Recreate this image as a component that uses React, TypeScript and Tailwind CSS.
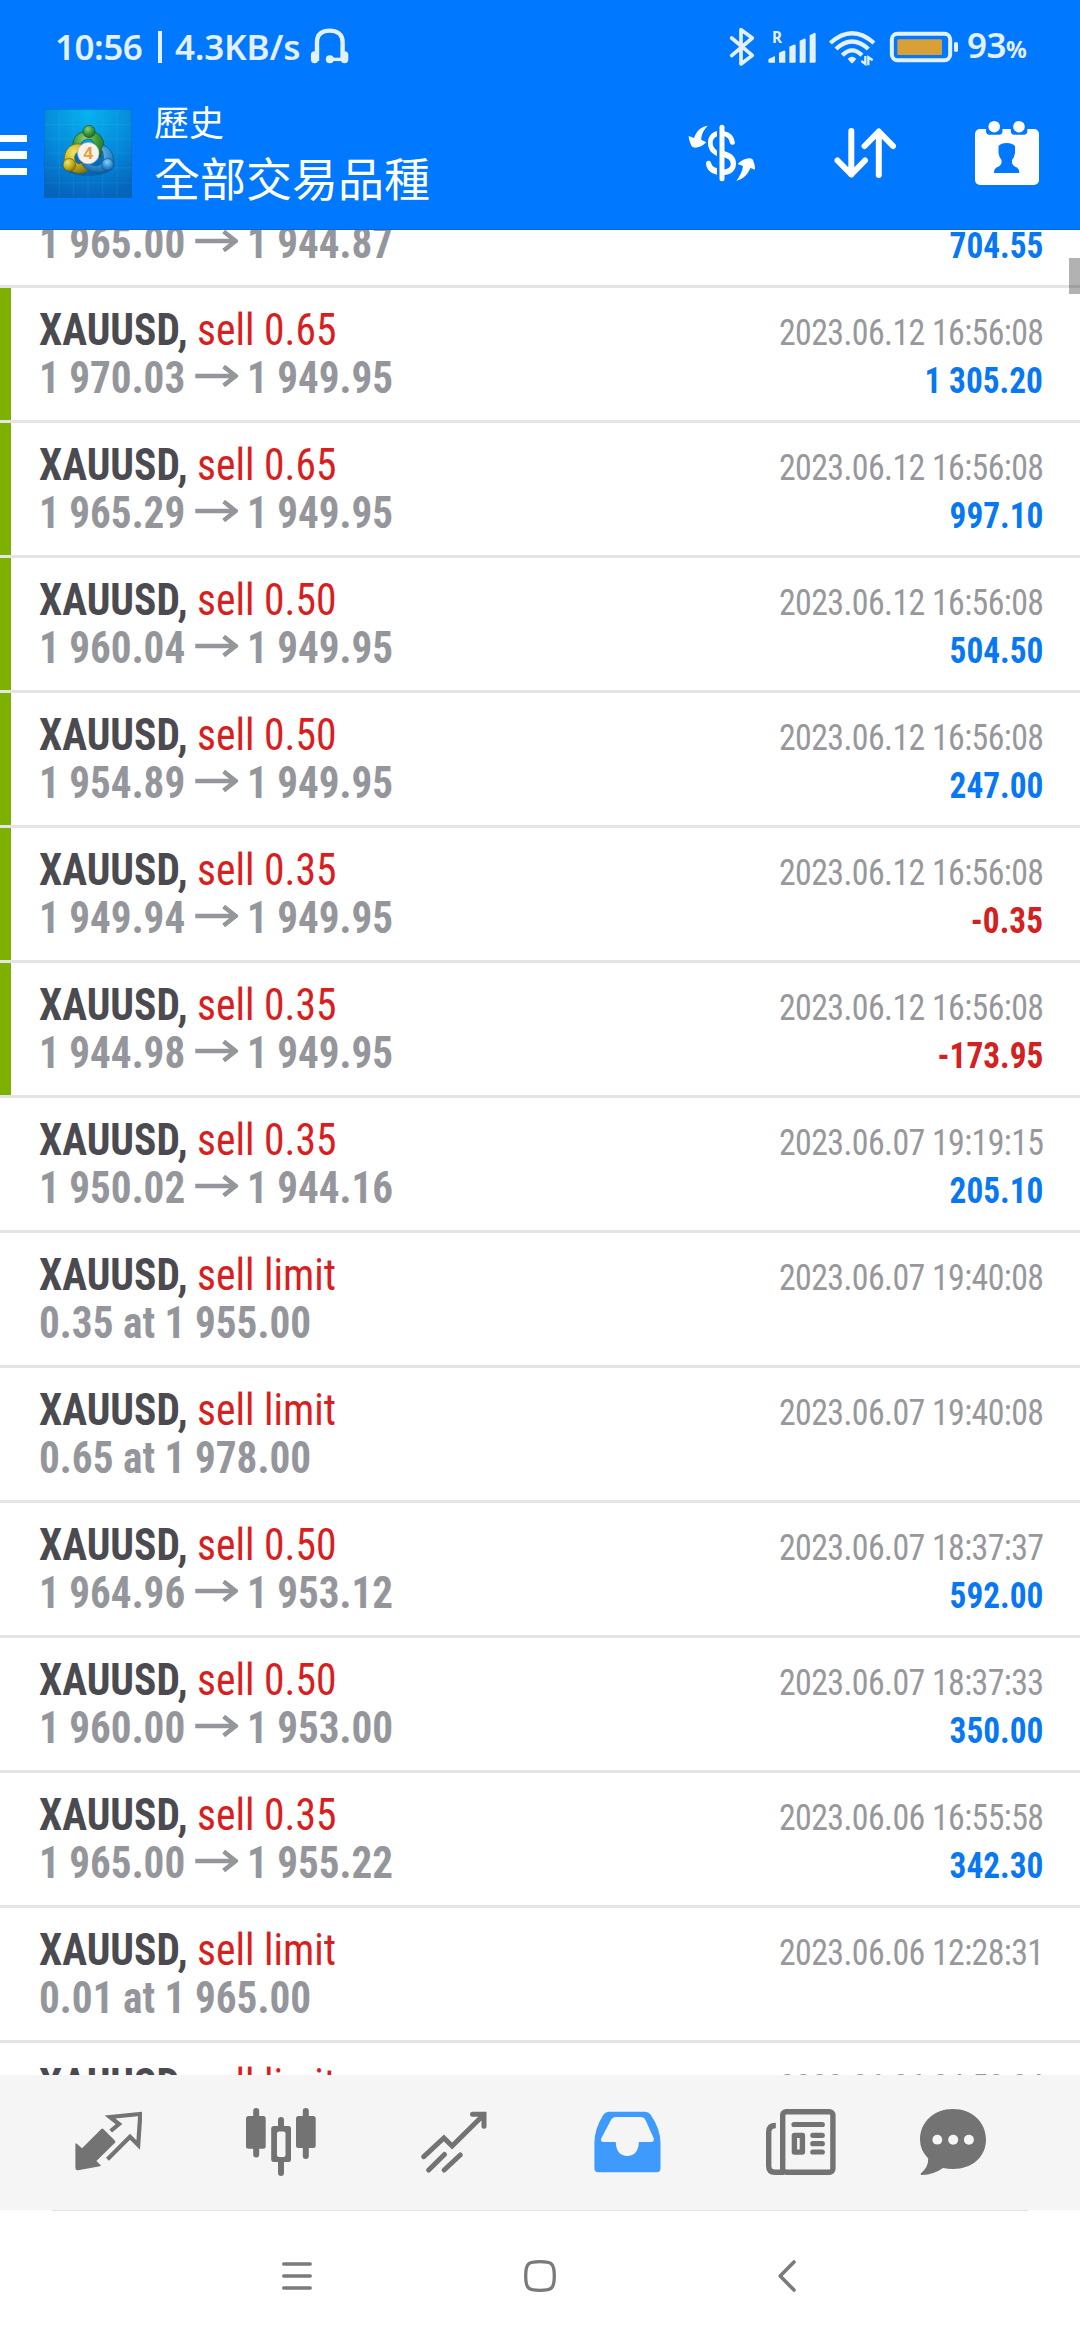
type Item = {
  action: string;
  time: string;
  open?: string;
  close?: string;
  note?: string;
  profit?: string;
  marked?: boolean;
};

const history: Item[] = [
  { action: 'sell 0.35', time: '2023.06.12 16:56:08', open: '1 965.00', close: '1 944.87', profit: '704.55' },
  { action: 'sell 0.65', time: '2023.06.12 16:56:08', open: '1 970.03', close: '1 949.95', profit: '1 305.20', marked: true },
  { action: 'sell 0.65', time: '2023.06.12 16:56:08', open: '1 965.29', close: '1 949.95', profit: '997.10', marked: true },
  { action: 'sell 0.50', time: '2023.06.12 16:56:08', open: '1 960.04', close: '1 949.95', profit: '504.50', marked: true },
  { action: 'sell 0.50', time: '2023.06.12 16:56:08', open: '1 954.89', close: '1 949.95', profit: '247.00', marked: true },
  { action: 'sell 0.35', time: '2023.06.12 16:56:08', open: '1 949.94', close: '1 949.95', profit: '-0.35', marked: true },
  { action: 'sell 0.35', time: '2023.06.12 16:56:08', open: '1 944.98', close: '1 949.95', profit: '-173.95', marked: true },
  { action: 'sell 0.35', time: '2023.06.07 19:19:15', open: '1 950.02', close: '1 944.16', profit: '205.10' },
  { action: 'sell limit', time: '2023.06.07 19:40:08', note: '0.35 at 1 955.00' },
  { action: 'sell limit', time: '2023.06.07 19:40:08', note: '0.65 at 1 978.00' },
  { action: 'sell 0.50', time: '2023.06.07 18:37:37', open: '1 964.96', close: '1 953.12', profit: '592.00' },
  { action: 'sell 0.50', time: '2023.06.07 18:37:33', open: '1 960.00', close: '1 953.00', profit: '350.00' },
  { action: 'sell 0.35', time: '2023.06.06 16:55:58', open: '1 965.00', close: '1 955.22', profit: '342.30' },
  { action: 'sell limit', time: '2023.06.06 12:28:31', note: '0.01 at 1 965.00' },
  { action: 'sell limit', time: '2023.06.06 04:58:04', note: '0.35 at 1 965.00' },
];

function StatusBar() {
  return (
    <div className="flex h-[94px] items-center pl-[55px] text-[35px] leading-[64px] font-semibold text-[#e3f0ff] font-['Noto_Sans',sans-serif]">
      <span className="w-[103px] tracking-[-0.5px]">10:56</span>
      <span className="h-[32px] w-[4px] bg-[#e3f0ff]" />
      <span className="ml-[13px] w-[135px] tracking-[-0.2px]">4.3KB/s</span>
      <svg className="h-[40px] w-[39px]" viewBox="0 0 39 40" fill="none" stroke="currentColor">
        <path d="M7 34V15C7 7 12.5 3.6 19.5 3.6S32.6 7 32.6 15V34" strokeWidth="4.4" />
        <path d="M4.6 28v4.6M34.6 28v4.6" strokeWidth="7.4" strokeLinecap="round" />
        <path d="M32 32.4H20" strokeWidth="3.4" />
        <circle cx="19.8" cy="32.2" r="4" fill="currentColor" stroke="none" />
      </svg>
      <svg className="ml-[380px] h-[42px] w-[26px]" viewBox="27 18 78 126" fill="none" stroke="currentColor" strokeWidth="11" strokeLinecap="round" strokeLinejoin="round">
        <path d="M35 54L97 106L63 132V29L97 54L35 107" />
      </svg>
      <svg className="ml-[12px] h-[42px] w-[50px]" viewBox="141 18 150 126" fill="currentColor">
        <text x="156" y="68" fontSize="46" fontWeight="700" textLength="30" lengthAdjust="spacingAndGlyphs">R</text>
        <path d="M145 120Q145 116 152 114L165 108V128H148Q145 128 145 125ZM177 98L190 92Q196 90 196 95V128H180Q177 128 177 125ZM208 80L221 74Q227 72 227 77V125Q227 128 224 128H208ZM239 62L252 56Q257 54 257 59V125Q257 128 254 128H239ZM269 46L282 39Q287 37 287 42V125Q287 128 284 128H269Z" />
      </svg>
      <svg className="ml-[11px] h-[42px] w-[48px]" viewBox="324 18 144 126" fill="none" stroke="currentColor" strokeWidth="13">
        <path d="M331 69Q396 10 462 69M348 87Q396 42 445 87M367 106Q396 76 426 106" />
        <path d="M383 117Q396 103 409 117L399 128Q396 131 393 128Z" fill="currentColor" stroke="none" />
        <path d="M436 108V132L424 123M445 136V112L458 121" strokeWidth="7" />
      </svg>
      <svg className="ml-[13px] h-[42px] w-[70px]" viewBox="507 18 210 126" fill="none">
        <rect x="515.5" y="41.5" width="175" height="79" rx="17" stroke="currentColor" strokeWidth="12" />
        <rect x="532" y="58" width="134" height="47" rx="4" fill="#daa038" />
        <rect x="702" y="66" width="12" height="30" rx="5" fill="currentColor" />
      </svg>
      <span className="ml-[8px] tracking-[-0.5px]">93<span className="text-[23px] font-bold">%</span></span>
    </div>
  );
}

function Logo() {
  return (
    <svg className="ml-[17px] h-[89px] w-[88px]" viewBox="12 9 264 266">
      <defs>
        <radialGradient id="sky" cx="50%" cy="5%" r="95%">
          <stop offset="0" stopColor="#06b2ee" />
          <stop offset="0.55" stopColor="#0589da" />
          <stop offset="1" stopColor="#0565bd" />
        </radialGradient>
        <radialGradient id="green" cx="40%" cy="30%" r="75%">
          <stop offset="0" stopColor="#8fd07f" />
          <stop offset="0.5" stopColor="#3e9c3b" />
          <stop offset="1" stopColor="#1a6a26" />
        </radialGradient>
        <radialGradient id="yellow" cx="35%" cy="30%" r="80%">
          <stop offset="0" stopColor="#efe76a" />
          <stop offset="0.55" stopColor="#c2ac1d" />
          <stop offset="1" stopColor="#7d6d10" />
        </radialGradient>
        <radialGradient id="azure" cx="45%" cy="30%" r="80%">
          <stop offset="0" stopColor="#8fd0f5" />
          <stop offset="0.55" stopColor="#2f8fd0" />
          <stop offset="1" stopColor="#115a9c" />
        </radialGradient>
      </defs>
      <rect x="12" y="9" width="264" height="266" fill="url(#sky)" />
      <path d="M58 9V275M101 9V275M144 9V275M188 9V275M231 9V275M12 55H276M12 98H276M12 141H276M12 185H276M12 230H276" stroke="#5cc6f5" strokeOpacity="0.2" strokeWidth="2" />
      <rect x="13" y="10" width="262" height="264" fill="none" stroke="#0560b0" strokeOpacity="0.6" strokeWidth="2" />
      <ellipse cx="145" cy="176" rx="78" ry="34" fill="#04407c" fillOpacity="0.35" />
      <g stroke="#18501f" strokeWidth="2">
        <path d="M99 122C96 92 116 75 145 75S194 92 192 128L180 154L165 128C163 108 158 99 145 99S123 108 121 122Z" fill="url(#green)" />
        <circle cx="147" cy="76" r="18" fill="url(#green)" />
      </g>
      <g stroke="#6a5b0c" strokeWidth="2">
        <path d="M124 114C92 108 70 132 73 165C80 200 124 214 152 188L134 164C122 180 104 172 104 156C104 142 112 136 124 134Z" fill="url(#yellow)" />
        <circle cx="88" cy="176" r="19" fill="url(#yellow)" />
      </g>
      <g stroke="#12508c" strokeWidth="2">
        <path d="M188 118C212 122 224 148 220 176C206 206 148 208 126 174L150 172C166 184 186 178 190 160C191 150 190 136 184 130Z" fill="url(#azure)" />
        <circle cx="203" cy="175" r="18" fill="url(#azure)" />
      </g>
      <circle cx="145" cy="141" r="32" fill="#f4f2f0" stroke="#b9b9b9" strokeWidth="2" />
      <text x="145" y="159" textAnchor="middle" fontSize="52" fontWeight="700" fill="#ee9a35" fontFamily="Liberation Sans">4</text>
    </svg>
  );
}

function AppHeader() {
  return (
    <div className="flex h-[118px] items-center pr-[40px] text-white">
      <div className="mt-[4px] flex w-[27px] flex-col gap-[9px]">
        <span className="h-[7.5px] bg-white" />
        <span className="h-[7.5px] bg-white" />
        <span className="h-[7.5px] bg-white" />
      </div>
      <Logo />
      <div className="mb-[2px] ml-[22px] flex flex-col gap-[3px] font-['Noto_Sans_CJK_TC',sans-serif]">
        <span className="text-[35px] leading-[44px]">歷史</span>
        <span className="text-[46px] leading-[60px]">全部交易品種</span>
      </div>

      <svg className="ml-auto h-[68px] w-[68px]" viewBox="24 27 204 204" fill="currentColor">
        <path d="M126 52V206" stroke="currentColor" strokeWidth="15" strokeLinecap="round" />
        <path d="M111 63C92 68 84 82 84 98C84 118 94 130 111 138V122C102 114 98 108 98 98C98 90 102 84 111 79Z" />
        <path d="M132 71Q153 75 157 97" fill="none" stroke="currentColor" strokeWidth="15" strokeLinecap="round" />
        <path d="M132 123C156 130 168 142 168 161C168 182 152 194 132 195V179C146 177 152 170 152 162C152 152 145 146 132 142Z" />
        <path d="M78 162C76 152 90 148 93 158C96 168 102 172 111 175V194C92 190 81 180 78 162Z" />
        <path d="M84 47C70 60 65 72 63.5 89L79 97C70 106 60 112 47 113C36 113 34 108 32 102C29 94 26 86 26 78L42 84C50 62 62 50 84 47Z" />
        <path d="M169 212C180 198 187 184 189 168L173 162C182 152 194 146 208 145C217 145 219 149 221 156C224 164 225 170 225 179L211 174C203 194 190 208 169 212Z" />
      </svg>
      <svg className="ml-[76px] h-[54px] w-[66px]" viewBox="0 0 66 54" fill="none" stroke="currentColor" strokeWidth="6" strokeLinecap="round" strokeLinejoin="round">
        <path d="M19.3 5V48.5M5.5 34.5L19.3 48.5L33 34.5M46.8 49V6M32.6 20L46.8 5.5L61 20" />
      </svg>
      <svg className="ml-[76px] h-[66px] w-[66px]" viewBox="0 0 66 66" fill="currentColor">
        <rect x="1" y="9" width="64" height="56" rx="5" />
        <path d="M12 6H28.5V11Q28.5 14.7 25 14.7H15.5Q12 14.7 12 11ZM36.8 6H53.3V11Q53.3 14.7 50 14.7H40.3Q36.8 14.7 36.8 11Z" fill="#0078ff" />
        <circle cx="20.2" cy="6.7" r="5.8" />
        <circle cx="45" cy="6.7" r="5.8" />
        <path d="M24.5 26Q27 23 32.6 23T41 26V33Q40.5 37 38 40V43Q39 46 43 47.5Q45.3 49 45.3 53H19.9Q19.9 49 22.5 47.5Q26.5 46 27.5 43V40Q25 37 24.5 33Z" fill="#0078ff" />
      </svg>
    </div>
  );
}

function HistoryRow({ item }: { item: Item }) {
  const negative = item.profit?.startsWith('-');
  return (
    <div className="flex h-[135px] shrink-0 border-b-[3px] border-[#e4e4e4]">
      <div className={item.marked ? 'w-[11px] bg-[#7db000]' : 'w-[11px]'} />
      <div className="flex-1 pt-[18px] pr-[37px] pl-[28px]">
        <div className="flex h-[48px] items-baseline justify-between leading-[48px]">
          <div className="origin-left scale-x-[0.943] text-[44px] whitespace-pre text-[#d81e1e]">
            <span className="font-bold text-[#4b4a50]">XAUUSD,</span> {item.action}
          </div>
          <div className="origin-right scale-x-[0.94] text-[36px] tracking-[-0.6px] text-[#98989c]">{item.time}</div>
        </div>
        <div className="flex h-[48px] items-baseline justify-between leading-[48px] font-bold">
          {item.note ? (
            <div className="origin-left scale-x-[0.937] text-[44px] text-[#95969b]">{item.note}</div>
          ) : (
            <div className="flex origin-left scale-x-[0.935] items-center text-[44px] text-[#95969b]">
              <span>{item.open}</span>
              <svg className="mt-[-5px] mr-[9px] ml-[11px] h-[22px] w-[46px]" viewBox="0 0 43 22" preserveAspectRatio="none" fill="none" stroke="currentColor" strokeWidth="4.5">
                <path d="M0 11H40M28.5 1.5L40.5 11L28.5 20.5" />
              </svg>
              <span>{item.close}</span>
            </div>
          )}
          {item.profit && (
            <div className={negative ? 'origin-right scale-x-[0.925] text-[36px] text-[#d32020]' : 'origin-right scale-x-[0.925] text-[36px] text-[#0878f2]'}>
              {item.profit}
            </div>
          )}
        </div>
      </div>
    </div>
  );
}

function TabBar() {
  return (
    <div className="flex h-[135px] items-center bg-[#f5f5f5] pb-[2px] pl-[75px] text-[#737373]">
      <svg className="h-[61px] w-[67px]" viewBox="0 0 67 61" fill="none">
        <path d="M.4 32.7Q.6 32 1.5 32.6L7 37.3L26.3 18Q27.3 17.2 28.3 18L40 29.7Q40.8 30.7 40 31.7L21.4 50L25.5 54Q26.3 55 25 55.3L3 59.3Q.4 59.4.4 57Z" fill="currentColor" />
        <path d="M35.7 20L44 13L35 6L65.3 3L63.2 34L55 25.7L32.5 48.2" stroke="currentColor" strokeWidth="4.2" />
      </svg>
      <svg className="ml-[104px] h-[68px] w-[70px]" viewBox="0 0 70 68" fill="none" stroke="currentColor">
        <path d="M10.2 3V46.5M35 12V20M35 54V65M59.8 3V48" strokeWidth="6" strokeLinecap="round" />
        <rect y="8" width="19.7" height="32.7" rx="2.5" fill="currentColor" stroke="none" />
        <rect x="50" y="8" width="19.7" height="32" rx="2.5" fill="currentColor" stroke="none" />
        <path d="M27.5 18H42.5Q45 18 45 20.5V51.5Q45 54 42.5 54H27.5Q25.2 54 25.2 51.5V20.5Q25.2 18 27.5 18ZM33 23.5Q31 23.5 31 25.5V47Q31 49 33 49H37.5Q39.5 49 39.5 47V25.5Q39.5 23.5 37.5 23.5Z" fill="currentColor" fillRule="evenodd" stroke="none" />
      </svg>
      <svg className="ml-[105px] h-[62px] w-[66px]" viewBox="0 0 66 62" fill="none" stroke="currentColor" strokeWidth="5" strokeLinecap="round">
        <path d="M2.8 45.7L22.9 27L31.1 35L62.5 4M51.5 3.3H63V15.3M7.7 59L23.4 43.5M23.2 59L39.2 44" />
      </svg>
      <svg className="ml-[107px] h-[62px] w-[67px]" viewBox="0 0 67 62" fill="#3f9afd">
        <path d="M15 .7H51Q54.5.7 56.5 3.5Q66.5 18 66.5 32V57Q66.5 61.3 62.5 61.3H4.5Q.4 61.3.4 57V32Q.4 18 9.5 3.5Q11.5.7 15 .7ZM22 6Q18.5 6 17 9L7.2 27.5Q6.2 31 10 31H21.8C21.8 40 26.5 45 33.3 45S44.8 40 44.8 31H56.5Q60.5 31 59.8 27.5L51.5 9Q50 6 46.5 6Z" fillRule="evenodd" />
      </svg>
      <svg className="ml-[105px] h-[66px] w-[70px]" viewBox="0 0 70 66" fill="none" stroke="currentColor" strokeWidth="5.4">
        <rect x="16.7" y="2.7" width="50.2" height="60.6" rx="3.5" />
        <path d="M9.8 16.5Q2.7 16.5 2.7 23V57Q2.7 63.3 9 63.3H18" />
        <path d="M28 15.5H56.3M46.8 26.3H56.3M46.8 34.7H56.3M46.8 43H56.3" strokeWidth="5.2" strokeLinecap="round" />
        <rect x="28.4" y="26.4" width="8" height="16.7" strokeWidth="5.4" strokeLinejoin="round" />
      </svg>
      <svg className="ml-[84px] h-[66px] w-[66px]" viewBox="0 0 66 66">
        <path d="M33 0C52 0 66 13 66 30.5S52 60 33 60Q28 60 23 59Q14 65.5 2 66Q0 66 .8 64.5Q8.5 58 8.2 49.5Q0 41 0 30.5C0 13 14 0 33 0Z" fill="currentColor" />
        <g fill="#f5f5f5">
          <circle cx="17.3" cy="30.7" r="4.9" />
          <circle cx="33.2" cy="30.7" r="5" />
          <circle cx="48.9" cy="30.7" r="5" />
        </g>
      </svg>
    </div>
  );
}

function SystemNav() {
  return (
    <div className="flex flex-1 items-center pl-[282px]">
      <svg className="h-[32px] w-[30px]" viewBox="0 0 30 32" fill="none" stroke="#7a7a7a" strokeWidth="3.3" strokeLinecap="round">
        <path d="M1.7 4H28.3M1.7 16H28.3M1.7 28H28.3" />
      </svg>
      <svg className="ml-[212px] h-[32px] w-[32px]" viewBox="0 0 32 32" fill="none" stroke="#7a7a7a" strokeWidth="3.3">
        <path d="M16 1.7C27.5 1.7 30.3 3 30.3 16S27.5 30.3 16 30.3S1.7 29 1.7 16S4.5 1.7 16 1.7Z" />
      </svg>
      <svg className="ml-[222px] h-[32px] w-[18px]" viewBox="0 0 18 32" fill="none" stroke="#7a7a7a" strokeWidth="3.6" strokeLinecap="round" strokeLinejoin="round">
        <path d="M16 2L2.2 16L16 30" />
      </svg>
    </div>
  );
}

export default function App() {
  return (
    <div className="flex h-[2340px] w-[1080px] flex-col overflow-hidden bg-white font-['Roboto_Condensed',Roboto,sans-serif]">
      <header className="h-[230px] shrink-0 border-b border-[#0a68d0] bg-[#0078ff]">
        <StatusBar />
        <AppHeader />
      </header>

      <main className="relative h-[1845px] shrink-0 overflow-hidden">
        <div className="mt-[-77px] flex flex-col">
          {history.map((item, i) => (
            <HistoryRow key={i} item={item} />
          ))}
        </div>
        {/* scroll thumb */}
        <div className="absolute top-[28px] right-0 h-[36px] w-[11px] bg-black/30" />
      </main>

      <TabBar />
      <div className="mx-[52px] h-px bg-[#e2e2e2]" />
      <SystemNav />
    </div>
  );
}
